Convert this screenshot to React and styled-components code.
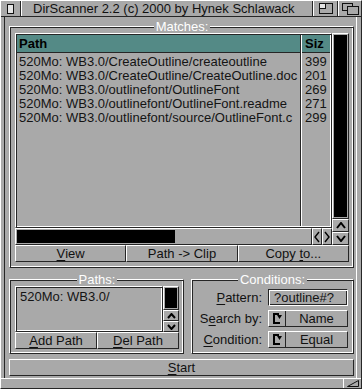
import React from "react";
import styled, { createGlobalStyle } from "styled-components";

const GRAY = "#a9a9a9";
const DARK = "#262626";
const SHINE = "#ffffff";
const TEAL = "#548a86";

const GlobalStyle = createGlobalStyle`
  * { box-sizing: border-box; }
  html, body { margin: 0; padding: 0; background: ${GRAY}; }
  body {
    font-family: "Liberation Sans", Arial, sans-serif;
    font-size: 13px;
    color: #141414;
  }
`;

const raised = `
  border: 1px solid;
  border-color: ${SHINE} ${DARK} ${DARK} ${SHINE};
`;

const ridge = `
  border: 1px solid;
  border-color: ${SHINE} ${DARK} ${DARK} ${SHINE};
  box-shadow: inset 1px 1px 0 ${DARK}, inset -1px -1px 0 ${SHINE};
`;

const Window = styled.div`
  width: 362px;
  height: 389px;
  display: flex;
  flex-direction: column;
  background: ${GRAY};
  border-top: 1px solid ${SHINE};
  border-left: 1px solid ${SHINE};
  border-right: 1px solid ${DARK};
  border-bottom: 1px solid ${DARK};
  overflow: hidden;
`;

const TitleBar = styled.div`
  height: 16px;
  flex: none;
  display: flex;
  border-bottom: 1px solid ${DARK};
`;

const TitleGadget = styled.div`
  width: ${(p) => p.$w}px;
  flex: none;
  display: flex;
  align-items: center;
  justify-content: center;
  border-left: ${(p) => (p.$first ? "none" : `1px solid ${SHINE}`)};
  border-right: ${(p) => (p.$last ? "none" : `1px solid ${DARK}`)};
`;

const Title = styled.div`
  flex: 1;
  min-width: 0;
  padding-left: 11px;
  line-height: 15px;
  white-space: nowrap;
  overflow: hidden;
  color: #111;
  border-left: 1px solid ${SHINE};
  border-right: 1px solid ${DARK};
`;

const Content = styled.div`
  flex: 1;
  display: flex;
  flex-direction: column;
  gap: 5px;
  margin: 0 4px 0 3px;
  padding: 3px 2px 0 4px;
  border-left: 1px solid ${DARK};
  border-right: 1px solid ${SHINE};
`;

const Group = styled.fieldset`
  margin: 0;
  min-width: 0;
  padding: ${(p) => p.$pad};
  ${ridge}
`;

const Legend = styled.legend`
  margin: 0 auto;
  padding: 0 2px;
  color: #fff;
  line-height: 13px;
  background: ${GRAY};
`;

const ListArea = styled.div`
  display: flex;
  height: ${(p) => p.$h}px;
`;

const ListColumn = styled.div`
  flex: 1;
  min-width: 0;
  display: flex;
  flex-direction: column;
`;

const SideColumn = styled.div`
  width: ${(p) => p.$w}px;
  flex: none;
  display: flex;
  flex-direction: column;
`;

const ListFrame = styled.div`
  flex: 1;
  min-height: 0;
  display: flex;
  overflow: hidden;
  padding: 1px;
  ${ridge}
`;

const Column = styled.div`
  display: flex;
  flex-direction: column;
  ${(p) =>
    p.$fixed
      ? `width: ${p.$fixed}px; flex: none; border-left: 1px solid ${DARK}; padding-left: 1px; box-shadow: inset 1px 0 0 ${SHINE};`
      : "flex: 1; min-width: 0;"}
`;

const HeaderCell = styled.div`
  height: 18px;
  line-height: 17px;
  background: ${TEAL};
  color: #000;
  font-weight: bold;
  padding-left: ${(p) => p.$pl || 2}px;
  border-bottom: 1px solid ${DARK};
  margin-bottom: 2px;
  white-space: nowrap;
  overflow: hidden;
`;

const Cell = styled.div`
  line-height: 14px;
  padding-left: ${(p) => p.$pl || 2}px;
  white-space: nowrap;
  overflow: hidden;
`;

const PathsText = styled.div`
  padding: 2px 0 0 3px;
  line-height: 14px;
  white-space: nowrap;
`;

const HScrollRow = styled.div`
  height: 17px;
  flex: none;
  display: flex;
`;

const PropFrame = styled.div`
  flex: 1;
  min-height: 0;
  display: flex;
  flex-direction: ${(p) => (p.$vertical ? "column" : "row")};
  padding: 1px;
  ${raised}
`;

const Knob = styled.div`
  background: #000;
  flex: ${(p) => (p.$size ? `0 0 ${p.$size}` : "1")};
`;

const ArrowButton = styled.div`
  flex: none;
  width: ${(p) => p.$w || "auto"};
  height: ${(p) => p.$h || "auto"};
  display: flex;
  align-items: center;
  justify-content: center;
  ${raised}
`;

const ButtonRow = styled.div`
  display: grid;
  grid-template-columns: repeat(${(p) => p.$cols}, 1fr);
  height: 17px;
`;

const Button = styled.div`
  display: flex;
  align-items: center;
  justify-content: center;
  line-height: 15px;
  white-space: nowrap;
  color: #111;
  ${raised}
`;

const Key = styled.span`
  text-decoration: underline;
  text-underline-offset: 2px;
  text-decoration-thickness: 1px;
`;

const LowerRow = styled.div`
  display: grid;
  grid-template-columns: 175px 1fr;
  column-gap: 7px;
`;

const Form = styled.div`
  display: grid;
  grid-template-columns: 1fr 80px;
  grid-auto-rows: 17px;
  column-gap: 6px;
  row-gap: 4px;
`;

const Label = styled.div`
  justify-self: end;
  line-height: 17px;
  white-space: nowrap;
  color: #111;
`;

const StringField = styled.div`
  padding-left: 5px;
  line-height: 15px;
  white-space: nowrap;
  border: 1px solid;
  border-color: ${DARK} ${SHINE} ${SHINE} ${DARK};
  box-shadow: inset 1px 1px 0 ${SHINE}, inset -1px -1px 0 ${DARK};
`;

const Cycle = styled.div`
  display: flex;
  ${raised}
`;

const CycleGlyph = styled.div`
  width: 17px;
  flex: none;
  display: flex;
  align-items: center;
  justify-content: center;
  border-right: 1px solid ${DARK};
`;

const CycleText = styled.div`
  flex: 1;
  text-align: center;
  line-height: 15px;
  color: #111;
`;

const StartButton = styled(Button)`
  height: 17px;
  flex: none;
`;

const BottomBar = styled.div`
  height: 10px;
  flex: none;
  display: flex;
  justify-content: flex-end;
  border-top: 1px solid ${SHINE};
`;

const ResizeGadget = styled.div`
  width: 18px;
  display: flex;
  align-items: center;
  justify-content: center;
  border-left: 1px solid ${SHINE};
`;

const CloseIcon = () => (
  <svg width="7" height="10" viewBox="0 0 7 10">
    <rect x="0.5" y="0.5" width="6" height="9" fill="#e4e4e4" stroke="#111" />
  </svg>
);

const ZoomIcon = () => (
  <svg width="14" height="11" viewBox="0 0 14 11">
    <rect x="0.5" y="0.5" width="13" height="10" fill={GRAY} stroke="#111" />
    <rect x="0.5" y="0.5" width="6" height="5" fill="#e4e4e4" stroke="#111" />
  </svg>
);

const DepthIcon = () => (
  <svg width="17" height="12" viewBox="0 0 17 12">
    <rect x="0.5" y="0.5" width="10" height="7" fill={GRAY} stroke="#111" />
    <rect x="5.5" y="3.5" width="11" height="8" fill={GRAY} stroke="#111" />
  </svg>
);

const Chevron = ({ dir, w = 10, h = 7 }) => {
  const pts = {
    up: `1,${h - 1} ${w / 2},1 ${w - 1},${h - 1}`,
    down: `1,1 ${w / 2},${h - 1} ${w - 1},1`,
    left: `${w - 1},1 1,${h / 2} ${w - 1},${h - 1}`,
    right: `1,1 ${w - 1},${h / 2} 1,${h - 1}`,
  }[dir];
  const thick = dir === "up" || dir === "down";
  return (
    <svg width={w} height={h} viewBox={`0 0 ${w} ${h}`}>
      <polyline points={pts} fill="none" stroke="#000" strokeWidth={thick ? 2 : 1.4} />
    </svg>
  );
};

const CycleIcon = () => (
  <svg width="11" height="13" viewBox="0 0 11 13">
    <path d="M7 2 H2 V11 H8" fill="none" stroke="#000" strokeWidth="2" />
    <polygon points="5,3 10,3 7.5,7" fill="#000" />
  </svg>
);

const ResizeIcon = () => (
  <svg width="12" height="7" viewBox="0 0 12 7">
    <polygon points="0.5,6.5 11.5,6.5 11.5,0.5" fill="none" stroke="#111" />
  </svg>
);

const matches = [
  ["520Mo: WB3.0/CreateOutline/createoutline", "399"],
  ["520Mo: WB3.0/CreateOutline/CreateOutline.doc", "201"],
  ["520Mo: WB3.0/outlinefont/OutlineFont", "269"],
  ["520Mo: WB3.0/outlinefont/OutlineFont.readme", "271"],
  ["520Mo: WB3.0/outlinefont/source/OutlineFont.c", "299"],
];

export default function App() {
  return (
    <>
      <GlobalStyle />
      <Window>
        <TitleBar>
          <TitleGadget $w={20} $first>
            <CloseIcon />
          </TitleGadget>
          <Title>DirScanner 2.2 (c) 2000 by Hynek Schlawack</Title>
          <TitleGadget $w={25}>
            <ZoomIcon />
          </TitleGadget>
          <TitleGadget $w={23} $last>
            <DepthIcon />
          </TitleGadget>
        </TitleBar>

        <Content>
          <Group $pad="0 4px 5px 5px">
            <Legend>Matches:</Legend>
            <ListArea $h={212}>
              <ListColumn>
                <ListFrame>
                  <Column>
                    <HeaderCell>Path</HeaderCell>
                    {matches.map(([path]) => (
                      <Cell key={path}>{path}</Cell>
                    ))}
                  </Column>
                  <Column $fixed={30}>
                    <HeaderCell $pl={3}>Siz</HeaderCell>
                    {matches.map(([path, size]) => (
                      <Cell key={path} $pl={3}>
                        {size}
                      </Cell>
                    ))}
                  </Column>
                </ListFrame>
                <HScrollRow>
                  <PropFrame>
                    <Knob $size="54%" />
                  </PropFrame>
                  <ArrowButton $w="10px">
                    <Chevron dir="left" w={6} h={12} />
                  </ArrowButton>
                  <ArrowButton $w="10px">
                    <Chevron dir="right" w={6} h={12} />
                  </ArrowButton>
                </HScrollRow>
              </ListColumn>
              <SideColumn $w={17}>
                <PropFrame $vertical>
                  <Knob />
                </PropFrame>
                <ArrowButton $h="13px">
                  <Chevron dir="up" />
                </ArrowButton>
                <ArrowButton $h="13px">
                  <Chevron dir="down" />
                </ArrowButton>
              </SideColumn>
            </ListArea>
            <ButtonRow $cols={3}>
              <Button>
                <Key>V</Key>iew
              </Button>
              <Button>Path -&gt; Clip</Button>
              <Button>
                Copy&nbsp;<Key>t</Key>o...
              </Button>
            </ButtonRow>
          </Group>

          <LowerRow>
            <Group $pad="0 4px 4px 5px">
              <Legend>Paths:</Legend>
              <ListArea $h={46}>
                <ListColumn>
                  <ListFrame>
                    <PathsText>520Mo: WB3.0/</PathsText>
                  </ListFrame>
                </ListColumn>
                <SideColumn $w={16}>
                  <PropFrame $vertical>
                    <Knob />
                  </PropFrame>
                  <ArrowButton $h="11px">
                    <Chevron dir="up" w={9} h={6} />
                  </ArrowButton>
                  <ArrowButton $h="11px">
                    <Chevron dir="down" w={9} h={6} />
                  </ArrowButton>
                </SideColumn>
              </ListArea>
              <ButtonRow $cols={2}>
                <Button>
                  <Key>A</Key>dd Path
                </Button>
                <Button>
                  <Key>D</Key>el Path
                </Button>
              </ButtonRow>
            </Group>

            <Group $pad="3px 5px 5px 5px">
              <Legend>Conditions:</Legend>
              <Form>
                <Label>
                  <Key>P</Key>attern:
                </Label>
                <StringField>?outline#?</StringField>
                <Label>
                  S<Key>e</Key>arch by:
                </Label>
                <Cycle>
                  <CycleGlyph>
                    <CycleIcon />
                  </CycleGlyph>
                  <CycleText>Name</CycleText>
                </Cycle>
                <Label>
                  <Key>C</Key>ondition:
                </Label>
                <Cycle>
                  <CycleGlyph>
                    <CycleIcon />
                  </CycleGlyph>
                  <CycleText>Equal</CycleText>
                </Cycle>
              </Form>
            </Group>
          </LowerRow>

          <StartButton>
            <Key>S</Key>tart
          </StartButton>
        </Content>

        <BottomBar>
          <ResizeGadget>
            <ResizeIcon />
          </ResizeGadget>
        </BottomBar>
      </Window>
    </>
  );
}
